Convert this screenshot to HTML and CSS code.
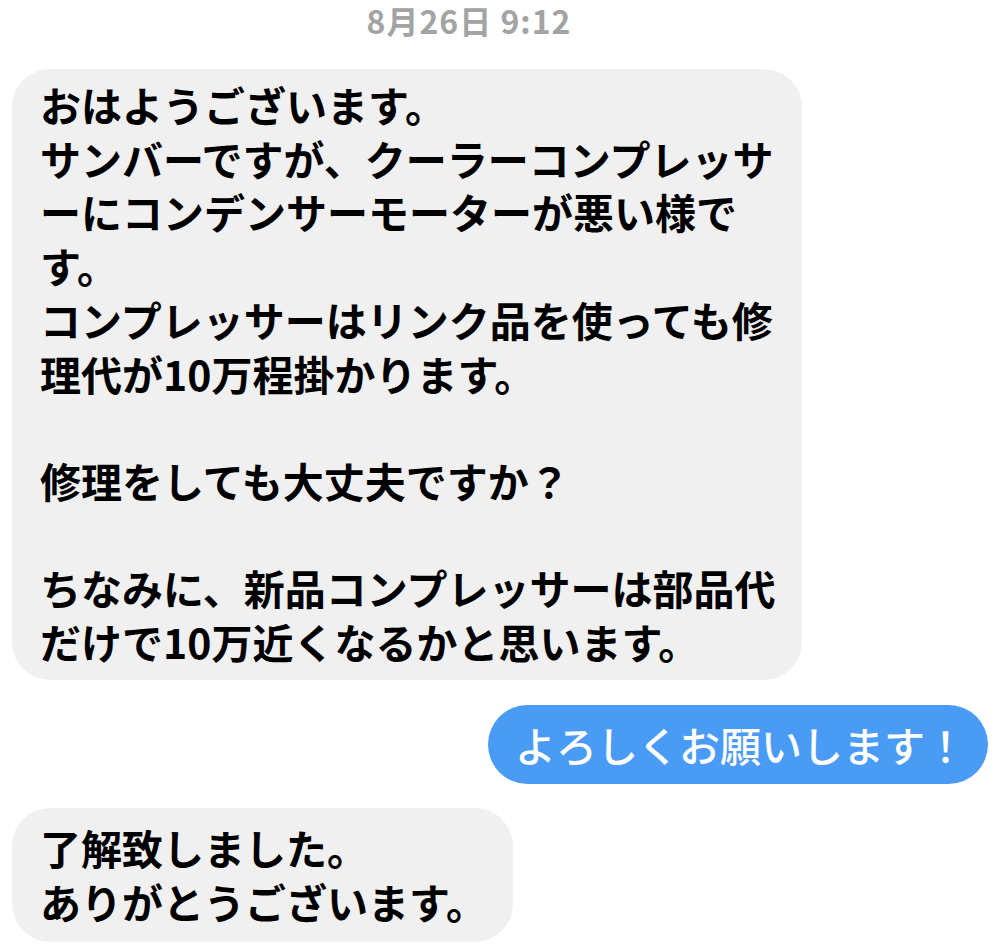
FILE: index.html
```html
<!DOCTYPE html>
<html>
<head>
  <meta charset="utf-8">
  <link rel="stylesheet" href="styles.css">
</head>
<body>
  <div class="chat">
    <div class="stamp">8月26日 9:12</div>

    <div class="row left">
      <div class="bubble gray first">おはようございます。<br>サンバーですが、クーラーコンプレッサ<br>ーにコンデンサーモーターが悪い様で<br>す。<br>コンプレッサーはリンク品を使っても修<br>理代が10万程掛かります。<br><br>修理をしても大丈夫ですか？<br><br>ちなみに、新品コンプレッサーは部品代<br>だけで10万近くなるかと思います。</div>
    </div>

    <div class="row right">
      <div class="bubble blue">よろしくお願いします！</div>
    </div>

    <div class="row left">
      <div class="bubble gray last">了解致しました。<br>ありがとうございます。</div>
    </div>
  </div>
</body>
</html>
```

FILE: styles.css
```css
body {
  margin: 0;
  background: #ffffff;
  font-family: "Noto Sans CJK JP", "Noto Sans", sans-serif;
}
.chat {
  display: flex;
  flex-direction: column;
  width: 998px;
  height: 946px;
  overflow: hidden;
}
.stamp {
  height: 40px;
  line-height: 40px;
  margin-right: 60px;
  text-align: center;
  font-size: 32px;
  font-weight: 700;
  letter-spacing: 1px;
  color: #a3a3a3;
}
.row {
  display: flex;
}
.row.left {
  justify-content: flex-start;
  padding-left: 12px;
}
.row.right {
  justify-content: flex-end;
  padding-right: 10px;
  margin-top: 25px;
  margin-bottom: 24px;
}
.bubble {
  font-size: 41px;
  font-weight: 700;
  line-height: 53.7px;
  white-space: nowrap;
  border-radius: 38px;
}
.bubble.gray {
  background: #f0f0f0;
  color: #000000;
  padding: 9px 26px 11px 28px;
}
.bubble.first {
  margin-top: 29px;
}
.bubble.last {
  padding-top: 13px;
  padding-bottom: 13px;
}
.bubble.blue {
  background: #4a9bf5;
  color: #ffffff;
  font-weight: 500;
  padding: 13px 22px 13px 27px;
  border-radius: 41px;
}
```
